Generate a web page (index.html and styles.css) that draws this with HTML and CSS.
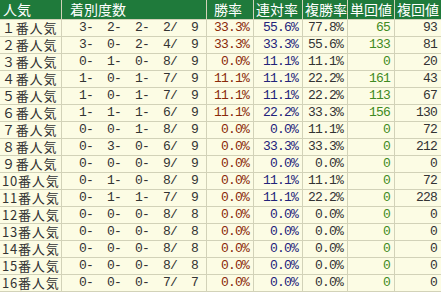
FILE: index.html
```html
<!DOCTYPE html>
<html lang="ja">
<head>
<meta charset="utf-8">
<link rel="stylesheet" href="styles.css">
</head>
<body>
<div class="grid">
  <div class="h h1">人気</div><div class="h h2">着別度数</div><div class="h h3">勝率</div><div class="h">連対率</div><div class="h">複勝率</div><div class="h">単回値</div><div class="h">複回値</div>

  <div class="c lab">１番人気</div><div class="c cnt">3-  2-  2-  2/  9</div><div class="c num win">33.3%</div><div class="c num ren">55.6%</div><div class="c num fuku">77.8%</div><div class="c num tan">65</div><div class="c num fk">93</div>
  <div class="c lab">２番人気</div><div class="c cnt">3-  0-  2-  4/  9</div><div class="c num win">33.3%</div><div class="c num ren">33.3%</div><div class="c num fuku">55.6%</div><div class="c num tan">133</div><div class="c num fk">81</div>
  <div class="c lab">３番人気</div><div class="c cnt">0-  1-  0-  8/  9</div><div class="c num win">0.0%</div><div class="c num ren">11.1%</div><div class="c num fuku">11.1%</div><div class="c num tan">0</div><div class="c num fk">20</div>
  <div class="c lab">４番人気</div><div class="c cnt">1-  0-  1-  7/  9</div><div class="c num win">11.1%</div><div class="c num ren">11.1%</div><div class="c num fuku">22.2%</div><div class="c num tan">161</div><div class="c num fk">43</div>
  <div class="c lab">５番人気</div><div class="c cnt">1-  0-  1-  7/  9</div><div class="c num win">11.1%</div><div class="c num ren">11.1%</div><div class="c num fuku">22.2%</div><div class="c num tan">113</div><div class="c num fk">67</div>
  <div class="c lab">６番人気</div><div class="c cnt">1-  1-  1-  6/  9</div><div class="c num win">11.1%</div><div class="c num ren">22.2%</div><div class="c num fuku">33.3%</div><div class="c num tan">156</div><div class="c num fk">130</div>
  <div class="c lab">７番人気</div><div class="c cnt">0-  0-  1-  8/  9</div><div class="c num win">0.0%</div><div class="c num ren">0.0%</div><div class="c num fuku">11.1%</div><div class="c num tan">0</div><div class="c num fk">72</div>
  <div class="c lab">８番人気</div><div class="c cnt">0-  3-  0-  6/  9</div><div class="c num win">0.0%</div><div class="c num ren">33.3%</div><div class="c num fuku">33.3%</div><div class="c num tan">0</div><div class="c num fk">212</div>
  <div class="c lab">９番人気</div><div class="c cnt">0-  0-  0-  9/  9</div><div class="c num win">0.0%</div><div class="c num ren">0.0%</div><div class="c num fuku">0.0%</div><div class="c num tan">0</div><div class="c num fk">0</div>
  <div class="c lab">10番人気</div><div class="c cnt">0-  1-  0-  8/  9</div><div class="c num win">0.0%</div><div class="c num ren">11.1%</div><div class="c num fuku">11.1%</div><div class="c num tan">0</div><div class="c num fk">72</div>
  <div class="c lab">11番人気</div><div class="c cnt">0-  1-  1-  7/  9</div><div class="c num win">0.0%</div><div class="c num ren">11.1%</div><div class="c num fuku">22.2%</div><div class="c num tan">0</div><div class="c num fk">228</div>
  <div class="c lab">12番人気</div><div class="c cnt">0-  0-  0-  8/  8</div><div class="c num win">0.0%</div><div class="c num ren">0.0%</div><div class="c num fuku">0.0%</div><div class="c num tan">0</div><div class="c num fk">0</div>
  <div class="c lab">13番人気</div><div class="c cnt">0-  0-  0-  8/  8</div><div class="c num win">0.0%</div><div class="c num ren">0.0%</div><div class="c num fuku">0.0%</div><div class="c num tan">0</div><div class="c num fk">0</div>
  <div class="c lab">14番人気</div><div class="c cnt">0-  0-  0-  8/  8</div><div class="c num win">0.0%</div><div class="c num ren">0.0%</div><div class="c num fuku">0.0%</div><div class="c num tan">0</div><div class="c num fk">0</div>
  <div class="c lab">15番人気</div><div class="c cnt">0-  0-  0-  8/  8</div><div class="c num win">0.0%</div><div class="c num ren">0.0%</div><div class="c num fuku">0.0%</div><div class="c num tan">0</div><div class="c num fk">0</div>
  <div class="c lab">16番人気</div><div class="c cnt">0-  0-  0-  7/  7</div><div class="c num win">0.0%</div><div class="c num ren">0.0%</div><div class="c num fuku">0.0%</div><div class="c num tan">0</div><div class="c num fk">0</div>
</div>
</body>
</html>
```

FILE: styles.css
```css
html, body {
  margin: 0;
  padding: 0;
  background: #fcfce4;
}

.grid {
  display: grid;
  grid-template-columns: 61px 144px 46px 48px 44px 46px 46px;
  grid-template-rows: 19px repeat(16, 16px);
  gap: 1px;
  width: 441px;
  height: 292px;
  padding-bottom: 1px;
  box-sizing: border-box;
  background: #d2d2b8;
  overflow: hidden;
}

.h {
  background: #1f7a3b;
  color: #ffffff;
  font-family: "Noto Sans CJK JP", sans-serif;
  font-size: 14px;
  line-height: 19px;
  padding-left: 2px;
  white-space: nowrap;
  overflow: hidden;
}

.h1 { padding-left: 3px; }
.h2 { padding-left: 8px; }
.h3 { padding-left: 7px; }

.c {
  background: #fcfce4;
  color: #333333;
  font-size: 13px;
  line-height: 16px;
  white-space: pre;
  overflow: hidden;
}

.lab {
  font-family: "Noto Sans CJK JP", sans-serif;
  font-size: 13px;
  line-height: 16px;
  padding-left: 2px;
  letter-spacing: 0.8px;
}

.cnt, .num {
  font-family: "Liberation Mono", monospace;
  letter-spacing: -0.8px;
  text-align: right;
}

.cnt { padding-right: 8px; }
.num { padding-right: 4px; }

.win { color: #8a2a0a; }
.ren { color: #23237a; }
.fuku { color: #333333; }
.tan { color: #3f8a22; }
.fk { color: #333333; }
```
